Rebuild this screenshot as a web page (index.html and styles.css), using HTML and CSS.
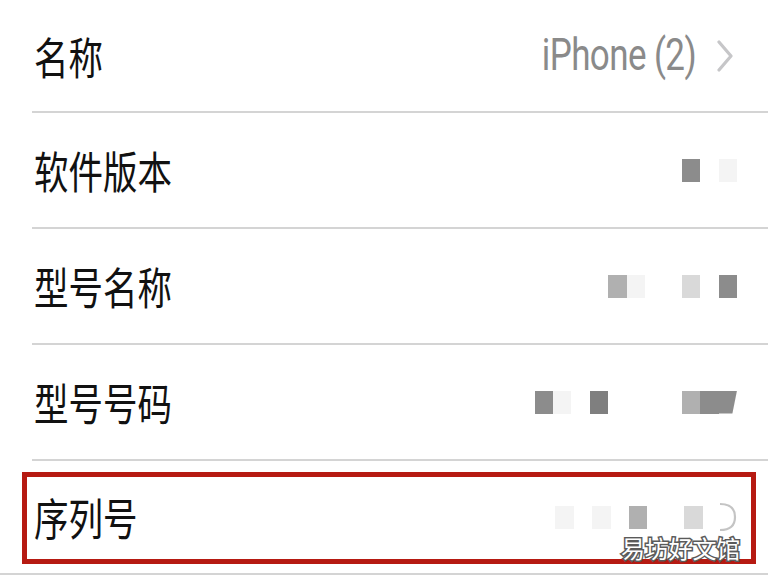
FILE: index.html
```html
<!DOCTYPE html>
<html lang="zh-CN">
<head>
  <meta charset="UTF-8">
  <title>关于本机</title>
  <link rel="stylesheet" href="styles.css">
</head>
<body>

  <div class="list">
    <div class="row first">
      <span class="label">名称</span>
      <span class="value">
        <span class="text">iPhone (2)</span>
        <svg class="chevron" width="18" height="32" viewBox="0 0 18 32">
          <path d="M3 2 L15 16 L3 30" fill="none" stroke="#c6c6c8" stroke-width="3.2" stroke-linecap="round" stroke-linejoin="round"/>
        </svg>
      </span>
    </div>

    <div class="row">
      <span class="label">软件版本</span>
      <span class="blur">
        <i class="cell dark"></i>
        <i class="cell"></i>
        <i class="cell faint"></i>
      </span>
    </div>

    <div class="row">
      <span class="label">型号名称</span>
      <span class="blur">
        <i class="cell mid"></i>
        <i class="cell faint"></i>
        <i class="cell"></i>
        <i class="cell"></i>
        <i class="cell light"></i>
        <i class="cell"></i>
        <i class="cell dark"></i>
      </span>
    </div>

    <div class="row">
      <span class="label">型号号码</span>
      <span class="blur">
        <i class="cell dark"></i>
        <i class="cell faint"></i>
        <i class="cell"></i>
        <i class="cell darker"></i>
        <i class="cell"></i>
        <i class="cell"></i>
        <i class="cell"></i>
        <i class="cell"></i>
        <i class="cell mid"></i>
        <i class="cell dark"></i>
        <i class="cell dark slant"></i>
      </span>
    </div>

    <div class="row last">
      <span class="label">序列号</span>
      <span class="blur">
        <i class="cell faint"></i>
        <i class="cell"></i>
        <i class="cell faint"></i>
        <i class="cell"></i>
        <i class="cell mid"></i>
        <i class="cell"></i>
        <i class="cell"></i>
        <i class="cell light"></i>
        <i class="cell"></i>
        <svg class="arc" width="20" height="30" viewBox="0 0 20 30">
          <path d="M3 2 Q18 2 18 15 Q18 28 3 28" fill="none" stroke="#c4c4c4" stroke-width="2.2"/>
        </svg>
      </span>
      <div class="mark"></div>
      <div class="watermark">易坊好文馆</div>
    </div>
  </div>

</body>
</html>
```

FILE: styles.css
```css
body {
  margin: 0;
  background: #fff;
  font-family: "Noto Sans CJK SC", sans-serif;
}

.list {
  padding-left: 32px;
  border-bottom: 2px solid #d4d4d4;
}

.row {
  position: relative;
  height: 114px;
  border-bottom: 2px solid #d4d4d4;
  display: flex;
  align-items: center;
  justify-content: space-between;
  padding-left: 2px;
  padding-right: 31px;
}

.row.first {
  height: 111px;
}

.row.last {
  height: 112px;
  border-bottom: none;
}

.label {
  font-size: 34.5px;
  color: #111;
  display: inline-block;
  transform: scaleY(1.28);
}

.value {
  display: flex;
  align-items: center;
  gap: 20px;
  margin-right: 3px;
}

.value .text {
  font-family: Roboto, "Liberation Sans", sans-serif;
  font-size: 35px;
  letter-spacing: -0.6px;
  color: #8a8a8a;
  display: inline-block;
  transform: scaleY(1.25);
}

.blur {
  display: flex;
  align-items: center;
}

.cell {
  display: block;
  width: 18.4px;
  height: 23px;
}

.cell.dark { background: #8c8c8c; }
.cell.darker { background: #7f7f7f; }
.cell.mid { background: #b0b0b0; }
.cell.light { background: #d9d9d9; }
.cell.faint { background: #f4f4f4; }

.cell.slant {
  clip-path: polygon(0 0, 100% 0, 75% 100%, 0 100%);
}

.arc {
  display: block;
  margin-left: -4px;
}

.mark {
  position: absolute;
  left: -10px;
  right: 12px;
  top: 11px;
  bottom: 9px;
  border: 5px solid #b61a12;
}

.watermark {
  position: absolute;
  right: 28px;
  bottom: 13px;
  font-size: 24px;
  line-height: 1;
  color: #fff;
  -webkit-text-stroke: 3px #5a5a5a;
  paint-order: stroke fill;
  letter-spacing: -0.2px;
}
```
